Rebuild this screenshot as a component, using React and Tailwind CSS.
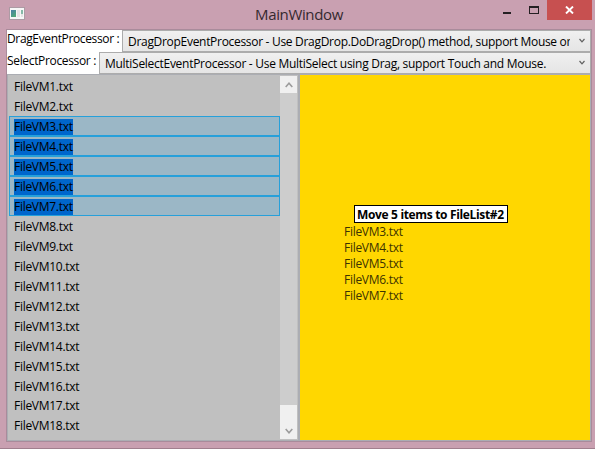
const files = Array.from({ length: 18 }, (_, i) => `FileVM${i + 1}.txt`);
const dragged = files.slice(2, 7);

function Chevron({ up = false, className = "" }) {
  return (
    <svg className={className} viewBox="0 0 8 6" fill="none" stroke="currentColor" strokeWidth="1.6">
      <path d={up ? "M0.7 5 L4 1.2 L7.3 5" : "M0.7 1 L4 4.8 L7.3 1"} />
    </svg>
  );
}

function TitleBar() {
  return (
    <header className="flex h-[29px] shrink-0 items-start">
      <svg className="ml-[9px] mt-[7px] h-[13px] w-[16px]" viewBox="0 0 16 13">
        <defs>
          <linearGradient id="pane" x1="0" y1="0" x2="0.6" y2="1">
            <stop offset="0" stopColor="#4b7fa8" />
            <stop offset="1" stopColor="#4fa878" />
          </linearGradient>
        </defs>
        <rect x="0.5" y="0.5" width="15" height="12" fill="#f7f7f7" stroke="#ac9ba4" />
        <rect x="2" y="3" width="5" height="7" fill="url(#pane)" />
        <rect x="8" y="3" width="3" height="7" fill="#e6e3e5" />
        <rect x="12" y="3" width="2" height="4" fill="#86b9a8" />
        <rect x="12" y="7" width="2" height="3" fill="#e6e3e5" />
      </svg>
      <h1 className="ml-[230px] mt-[4px] w-[90px] whitespace-nowrap text-[15px] leading-[21px] tracking-[-0.35px] text-[#35292f]">
        MainWindow
      </h1>
      <div className="ml-auto flex h-[20px]">
        <div className="flex w-[26px] items-start pt-[12px]">
          <span className="h-[2px] w-[8px] bg-[#252023]" />
        </div>
        <div className="flex w-[18px] items-start pt-[6px]">
          <span className="h-[8px] w-[10px] border border-t-2 border-[#252023]" />
        </div>
        <div className="mr-[3px] flex w-[45px] items-center justify-center bg-[#c75050]">
          <svg className="h-[8px] w-[9px]" viewBox="0 0 9 8" stroke="white" strokeWidth="1.9">
            <path d="M1 0.5 L8 7.5 M8 0.5 L1 7.5" />
          </svg>
        </div>
      </div>
    </header>
  );
}

function SelectorRow({ label, labelClass, value, valueClass }) {
  return (
    <div className="flex h-[22px] bg-white">
      <div className={`shrink-0 whitespace-nowrap leading-[18px] ${labelClass}`}>{label}</div>
      <div className="flex min-w-0 flex-1 items-center border border-[#acacac] bg-linear-to-b from-[#f0f0f0] to-[#e5e5e5] pl-[5px]">
        <span className={`min-w-0 flex-1 overflow-hidden whitespace-nowrap pt-[2px] leading-[18px] ${valueClass}`}>
          {value}
        </span>
        <Chevron className="mb-[2px] ml-[9px] mr-[5px] h-[5px] w-[6px] shrink-0 text-[#606060]" />
      </div>
    </div>
  );
}

function FileList() {
  return (
    <div className="flex w-[292px] border-x border-t border-[#abadb3] bg-[#c0c0c0] pt-px pr-px">
      <ul className="min-w-0 flex-1 pl-px">
        {files.map((name) => {
          const selected = dragged.includes(name);
          return (
            <li
              key={name}
              className={`flex h-[19.97px] w-[271px] items-center border pl-[4px] pt-[2px] ${
                selected ? "border-[#26a0da] bg-[#9bb7c6]" : "border-transparent"
              }`}
            >
              <span className={`whitespace-nowrap leading-[16px] tracking-[-0.28px] ${selected ? "bg-[#0066cc]" : ""}`}>
                {name}
              </span>
            </li>
          );
        })}
      </ul>
      <div className="mb-px flex w-[17px] shrink-0 flex-col justify-between bg-[#cdcdcd] text-[#9c9c9c]">
        <div className="flex h-[17px] items-center justify-center bg-[#f0f0f0]">
          <Chevron up className="h-[6px] w-[8px]" />
        </div>
        <div className="flex h-[34px] items-end justify-center bg-[#f0f0f0] pb-[5px]">
          <Chevron className="h-[6px] w-[8px]" />
        </div>
      </div>
    </div>
  );
}

function DropTarget() {
  return (
    <div className="relative flex-1 border-x border-t border-[#abadb3] bg-[#ffd700]">
      <div className="absolute left-[44px] top-[130px]">
        <div className="ml-[10px] flex h-[18px] w-[154px] items-center border border-black bg-white pl-[2px] pt-px font-bold">
          <span className="whitespace-nowrap leading-[16px] tracking-[-0.34px]">Move 5 items to FileList#2</span>
        </div>
        <ul className="pt-px text-[#3d3300]">
          {dragged.map((name) => (
            <li key={name} className="h-[16px] leading-[16px] tracking-[-0.28px]">
              {name}
            </li>
          ))}
        </ul>
      </div>
    </div>
  );
}

export default function App() {
  return (
    <div className="flex h-[449px] w-[595px] flex-col overflow-hidden border-b border-[#a07f8e] bg-[#c9a0b1] font-['Open_Sans','Noto_Sans',sans-serif] text-[12px] text-black">
      <TitleBar />
      <main className="ml-[6px] flex h-[413px] w-[586px] flex-col border border-[#a98b9b]">
        <SelectorRow
          label="DragEventProcessor :"
          labelClass="w-[115px] tracking-[-0.36px]"
          value="DragDropEventProcessor - Use DragDrop.DoDragDrop() method, support Mouse or"
          valueClass="tracking-[-0.3px]"
        />
        <SelectorRow
          label="SelectProcessor :"
          labelClass="w-[92px] tracking-[-0.34px]"
          value="MultiSelectEventProcessor - Use MultiSelect using Drag, support Touch and Mouse."
          valueClass="tracking-[-0.28px]"
        />
        <div className="flex min-h-0 flex-1 border-b border-[#abadb3]">
          <FileList />
          <DropTarget />
        </div>
      </main>
    </div>
  );
}
